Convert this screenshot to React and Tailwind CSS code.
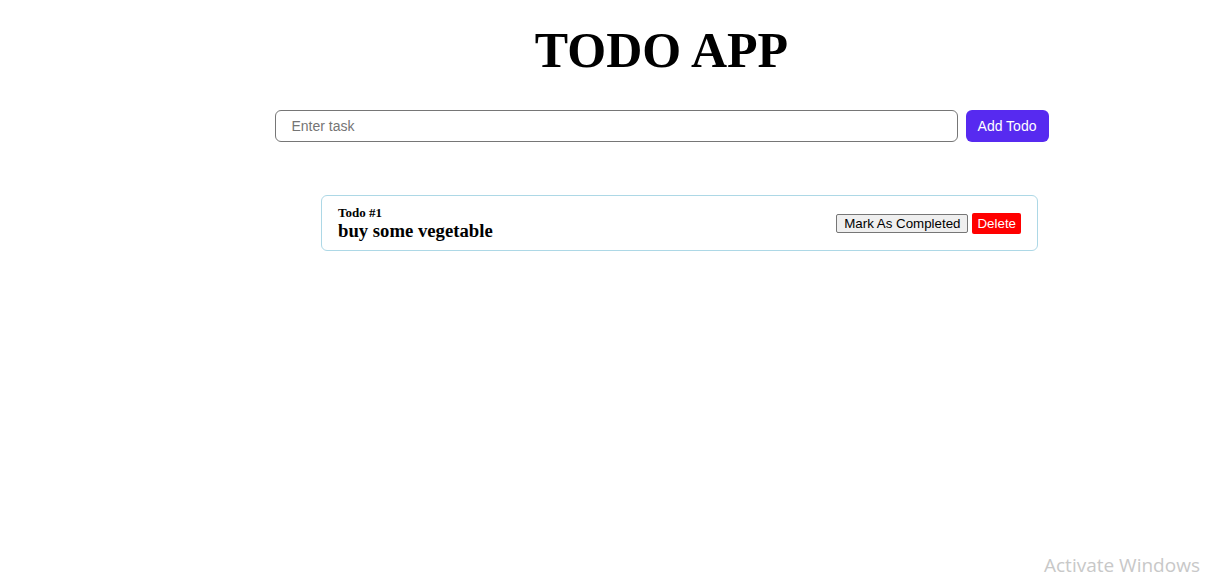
export default function App() {
  return (
    <div className="relative w-[1227px] h-[574px] bg-white overflow-hidden">
      <div className="pl-[96px] flex flex-col items-center">
        <h1 className="mt-[18px] text-[50px] leading-[64px] font-bold text-black" style={{ fontFamily: '"Liberation Serif", "Times New Roman", serif' }}>
          TODO APP
        </h1>
        <div className="mt-[28px] flex items-center gap-[8px]">
          <input
            className="w-[683px] h-[32px] border border-[#767676] rounded-[6px] px-[16px] text-[14px] text-black placeholder:text-[#757575] outline-none"
            style={{ fontFamily: '"Liberation Sans", Arial, sans-serif' }}
            placeholder="Enter task"
          />
          <button
            className="w-[83px] h-[32px] rounded-[6px] bg-[#572af0] text-white text-[14px]"
            style={{ fontFamily: '"Liberation Sans", Arial, sans-serif' }}
          >
            Add Todo
          </button>
        </div>
      </div>
      <div className="mt-[53px] ml-[321px] w-[717px] h-[56px] border border-[#add8e6] rounded-[6px] flex items-center justify-between px-[16px]">
        <div className="flex flex-col" style={{ fontFamily: '"Liberation Serif", "Times New Roman", serif' }}>
          <span className="text-[13px] leading-[15px] font-bold text-black">Todo #1</span>
          <span className="text-[18.7px] leading-[22px] font-bold text-black">buy some vegetable</span>
        </div>
        <div className="flex items-center gap-[4px]" style={{ fontFamily: '"Liberation Sans", Arial, sans-serif' }}>
          <button className="h-[19px] px-[7px] text-[13.33px] leading-[15px] text-black bg-[#efefef] border border-[#767676] rounded-[2px]">
            Mark As Completed
          </button>
          <button className="h-[21px] px-[5px] text-[13.33px] leading-[15px] text-white bg-[#ff0000] rounded-[2px]">
            Delete
          </button>
        </div>
      </div>
      <div
        className="absolute left-[1044px] top-[556px] text-[19px] leading-[19px] text-[#c8c8c8]"
        style={{ fontFamily: '"Open Sans", "Noto Sans", sans-serif' }}
      >
        Activate Windows
      </div>
    </div>
  );
}
